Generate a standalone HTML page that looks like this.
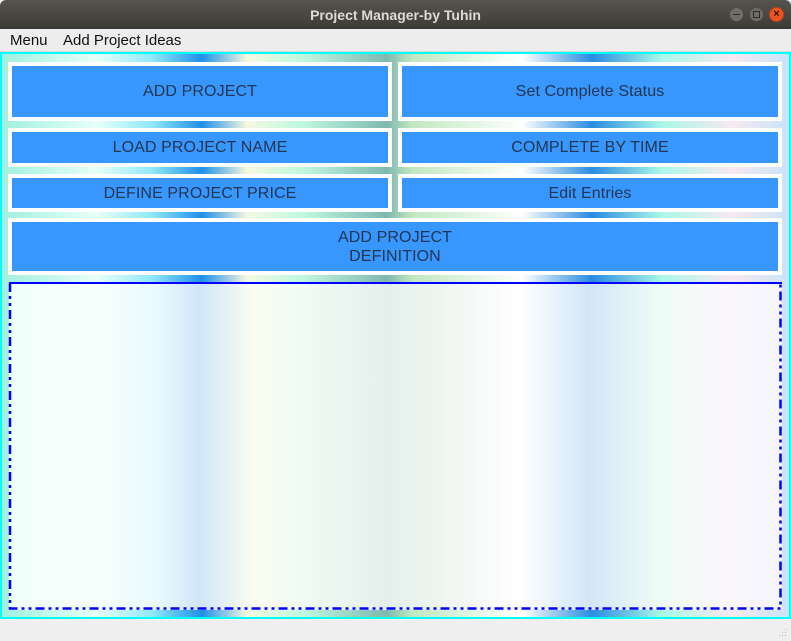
<!DOCTYPE html>
<html><head><meta charset="utf-8"><style>
*{margin:0;padding:0;box-sizing:border-box}
body{width:791px;height:641px;overflow:hidden;background:#efefef;font-family:"Liberation Sans",sans-serif;position:relative}
.title{position:absolute;left:0;top:0;width:791px;height:29px;background:linear-gradient(#56544e,#3c3b37);color:#dfdbd2;font-weight:bold;font-size:14px;text-align:center;line-height:30px;border-radius:6px 6px 0 0}
.wb{position:absolute;top:7px;width:15px;height:15px;border-radius:50%;background:#6f6d68;border:1px solid #4a4945}
.menu{position:absolute;top:29px;left:0;width:791px;height:23px;background:#ededed;font-size:15px;color:#111;border-bottom:1px solid #d8d8d8}
.menu span{position:absolute;top:3px}
.frame{position:absolute;left:0;top:52px;width:791px;height:567px;border:2px solid #00ffff;
background:linear-gradient(90deg,#a0f0e0 0px,#e8fff8 95px,#90e8f8 150px,#2090e8 200px,#f5f8e0 245px,#c0f8e0 300px,#80b8b0 385px,#c0e8c0 410px,#ffffff 520px,#2a8ce0 590px,#aaf8e8 660px,#f8e8f0 730px,#c8e4f8 789px)}
.btn{position:absolute;background:#3797ff;border:4px solid #fff;color:#243650;font-size:16px;display:flex;align-items:center;justify-content:center;text-align:center;line-height:19px;letter-spacing:0.1px}
.ta{position:absolute;left:9px;top:282px;width:773px;height:328px;
background:linear-gradient(90deg,#f0fffa 0px,#f6fffb 90px,#e8fafe 150px,#d0e6f8 190px,#fafdf2 245px,#eefbf4 300px,#e4efec 380px,#eef5f0 430px,#ffffff 510px,#d2e6f8 580px,#eefcf6 650px,#fbf7fb 720px,#f4f6fd 773px)}
</style></head><body>
<div class="title">Project Manager-by Tuhin</div>
<div class="wb" style="left:729px"><div style="position:absolute;left:3px;top:6px;width:7px;height:1px;background:#2c2b28"></div></div>
<div class="wb" style="left:749px"><div style="position:absolute;left:3px;top:3px;width:7px;height:7px;border:1px solid #2c2b28"></div></div>
<div class="wb" style="left:769px;background:#e95420;border-color:#c0421a;color:#3a1205;font-size:11px;line-height:13px;text-align:center;font-weight:bold">×</div>
<div class="menu"><span style="left:10px">Menu</span><span style="left:63px">Add Project Ideas</span></div>
<div class="frame"></div>
<div class="btn" style="left:8px;top:62px;width:384px;height:59px">ADD PROJECT</div>
<div class="btn" style="left:398px;top:62px;width:384px;height:59px">Set Complete Status</div>
<div class="btn" style="left:8px;top:128px;width:384px;height:39px">LOAD PROJECT NAME</div>
<div class="btn" style="left:398px;top:128px;width:384px;height:39px">COMPLETE BY TIME</div>
<div class="btn" style="left:8px;top:174px;width:384px;height:38px">DEFINE PROJECT PRICE</div>
<div class="btn" style="left:398px;top:174px;width:384px;height:38px">Edit Entries</div>
<div class="btn" style="left:8px;top:218px;width:774px;height:57px">ADD PROJECT<br>DEFINITION</div>
<div class="ta"></div>
<svg style="position:absolute;left:0;top:0" width="791" height="641">
<line x1="9" y1="283" x2="782" y2="283" stroke="#0000ff" stroke-width="2"/>
<path d="M10 283 V608.5 H780.5 V283" fill="none" stroke="#0000ff" stroke-width="2.5" stroke-dasharray="9 4 3 4 3 4"/>
<g fill="#b8b8b8"><rect x="785" y="629" width="1" height="1"/><rect x="782" y="632" width="1" height="1"/><rect x="785" y="632" width="1" height="1"/><rect x="779" y="635" width="1" height="1"/><rect x="782" y="635" width="1" height="1"/><rect x="785" y="635" width="1" height="1"/></g>
</svg>
</body></html>
